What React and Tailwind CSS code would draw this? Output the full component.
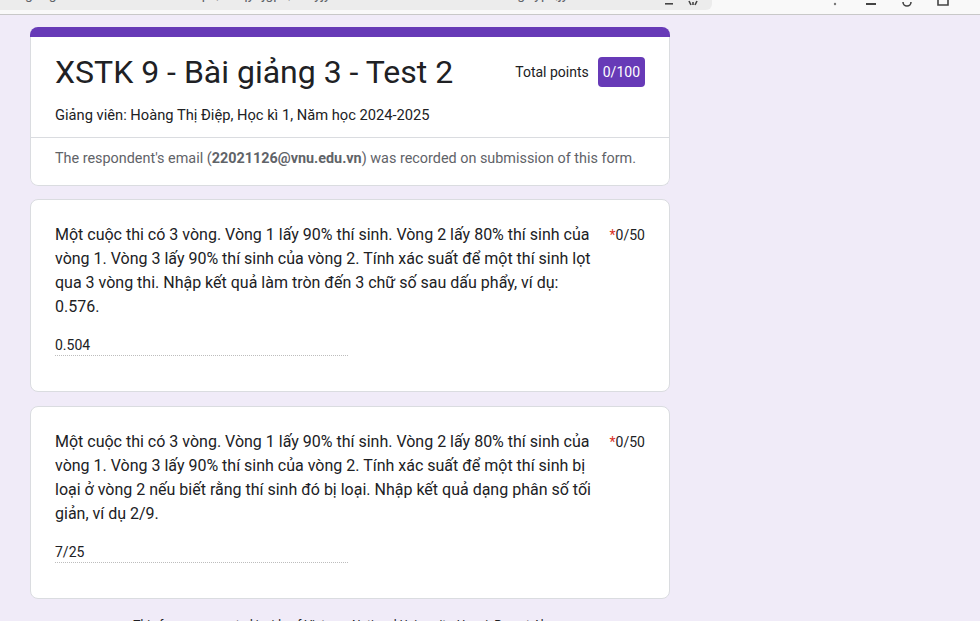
import React from "react";

const font = { fontFamily: "Roboto, 'Noto Sans', Arial, sans-serif" };

function TopBar() {
  return (
    <div className="h-[15px] bg-[#f9f9f9] border-b border-[#c8c8c8] flex overflow-hidden">
      <div className="w-[712px] h-[10px] bg-[#ececec] rounded-br-[6px] overflow-hidden shrink-0 flex justify-between pr-[12px]">
        <div className="text-[14px] leading-[20px] text-[#5f6368] -mt-[16px] pl-[14px] whitespace-nowrap">
          s.google.com/forms/d/e/1FAIpQLSfqy7jgpQdL8yjy/viewscore?viewscore=AE0zAgDypQjy
        </div>
        <div className="flex gap-[10px] -mt-[8px]">
          <svg width="14" height="14" viewBox="0 0 14 14"><rect x="3" y="11" width="8" height="1.6" fill="#444" /></svg>
          <svg width="14" height="14" viewBox="0 0 14 14"><path d="M3 9 L5 13 M11 9 L9 13 M7 10 v3" stroke="#444" strokeWidth="1.6" fill="none" /></svg>
        </div>
      </div>
      <div className="flex-1 flex items-start justify-end gap-[22px] pr-[30px]">
        <svg className="-mt-[6px]" width="14" height="14" viewBox="0 0 14 14"><circle cx="7" cy="10" r="1.2" fill="#777" /></svg>
        <svg className="-mt-[6px]" width="14" height="14" viewBox="0 0 14 14"><rect x="2" y="9" width="10" height="2" fill="#444" /></svg>
        <svg className="-mt-[6px]" width="14" height="14" viewBox="0 0 14 14"><path d="M3 8 A4 4 0 0 0 11 8" stroke="#444" strokeWidth="1.6" fill="none" /></svg>
        <svg className="-mt-[6px]" width="14" height="14" viewBox="0 0 14 14"><path d="M2 4 V11 H12 V4" stroke="#444" strokeWidth="1.6" fill="none" /></svg>
      </div>
    </div>
  );
}

function Question({ text, answer, first }) {
  return (
    <div className={`bg-white border border-[#dadce0] rounded-lg pt-[23px] pb-[35px] pl-[24px] pr-[24px] ${first ? "mt-[13px]" : "mt-[14px]"}`}>
      <div className="flex items-start">
        <div className="w-[545px] text-[16px] leading-[24px] text-[#202124]">{text}</div>
        <div className="ml-auto text-[14px] leading-[24px] text-[#202124] whitespace-nowrap">
          <span className="text-[#d93025]">*</span>0/50
        </div>
      </div>
      <div className="mt-[16px] w-[293px] border-b border-dotted border-[#bdbdbd] text-[14px] leading-[20px] text-[#202124]">
        {answer}
      </div>
    </div>
  );
}

export default function App() {
  return (
    <div className="min-h-[621px] h-[621px] overflow-hidden bg-[#f0ebf8]" style={font}>
      <TopBar />
      <div className="ml-[30px] w-[640px] pt-[12px]">
        <div className="rounded-lg overflow-hidden">
          <div className="h-[10px] bg-[#673ab7]" />
          <div className="bg-white border-x border-b border-[#dadce0] rounded-b-lg">
            <div className="px-[24px] pt-[15px]">
              <div className="flex items-center justify-between h-[40px]">
                <div className="text-[32px] leading-[40px] text-[#202124]">XSTK 9 - Bài giảng 3 - Test 2</div>
                <div className="flex items-center">
                  <span className="text-[14px] text-[#202124]">Total points</span>
                  <span className="ml-[9px] h-[30px] px-[5px] rounded-[4px] bg-[#673ab7] text-white text-[14px] flex items-center">0/100</span>
                </div>
              </div>
              <div className="mt-[13px] text-[14.7px] leading-[20px] text-[#202124]">
                Giảng viên: Hoàng Thị Điệp, Học kì 1, Năm học 2024-2025
              </div>
            </div>
            <div className="mt-[12px] border-t border-[#dadce0]" />
            <div className="px-[24px] pt-[11px] pb-[16px] text-[14.4px] leading-[20px] text-[#5f6368]">
              The respondent's email (<span className="font-bold">22021126@vnu.edu.vn</span>) was recorded on submission of this form.
            </div>
          </div>
        </div>
        <Question
          first
          text="Một cuộc thi có 3 vòng. Vòng 1 lấy 90% thí sinh. Vòng 2 lấy 80% thí sinh của vòng 1. Vòng 3 lấy 90% thí sinh của vòng 2. Tính xác suất để một thí sinh lọt qua 3 vòng thi. Nhập kết quả làm tròn đến 3 chữ số sau dấu phẩy, ví dụ: 0.576."
          answer="0.504"
        />
        <Question
          text="Một cuộc thi có 3 vòng. Vòng 1 lấy 90% thí sinh. Vòng 2 lấy 80% thí sinh của vòng 1. Vòng 3 lấy 90% thí sinh của vòng 2. Tính xác suất để một thí sinh bị loại ở vòng 2 nếu biết rằng thí sinh đó bị loại. Nhập kết quả dạng phân số tối giản, ví dụ 2/9."
          answer="7/25"
        />
        <div className="mt-[18px] text-center text-[12px] leading-[16px] text-[#202124]">
          This form was created inside of Vietnam National University, Hanoi. <span className="underline">Report Abuse</span>
        </div>
      </div>
    </div>
  );
}
